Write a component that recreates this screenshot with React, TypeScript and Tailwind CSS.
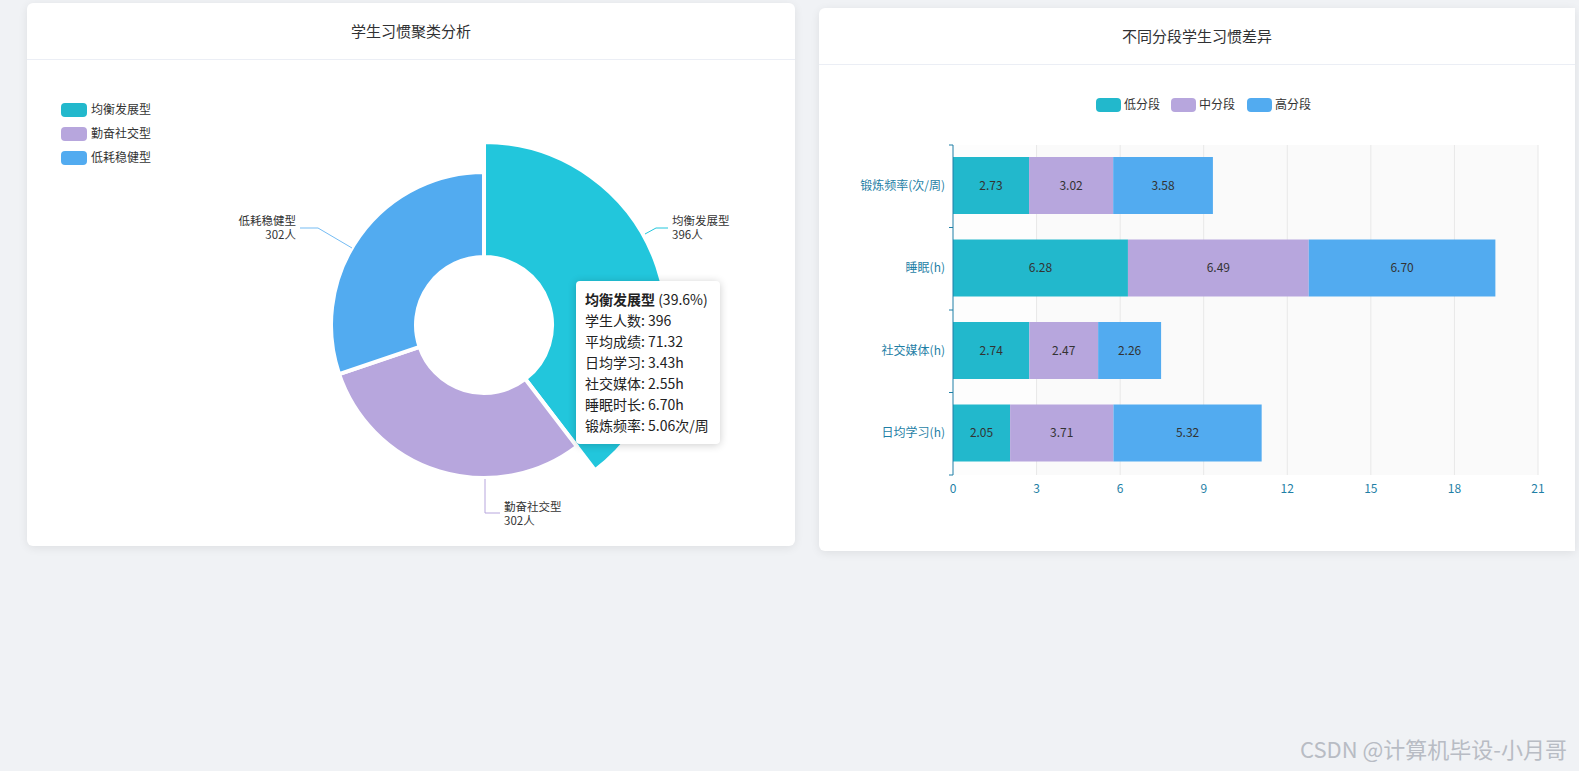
import React from "react";

const F = '"Noto Sans CJK SC", "Noto Sans", sans-serif';

function arc(cx: number, cy: number, r0: number, r1: number, a0: number, a1: number) {
  const p = (r: number, a: number) => {
    const t = ((a - 90) * Math.PI) / 180;
    return `${(cx + r * Math.cos(t)).toFixed(2)},${(cy + r * Math.sin(t)).toFixed(2)}`;
  };
  const large = a1 - a0 > 180 ? 1 : 0;
  return `M${p(r1, a0)} A${r1},${r1} 0 ${large} 1 ${p(r1, a1)} L${p(r0, a1)} A${r0},${r0} 0 ${large} 0 ${p(r0, a0)} Z`;
}

const TEAL = "#22c6dc";
const PURP = "#b7a6dd";
const BLUE = "#52abf0";

function Donut() {
  const cx = 484, cy = 325;
  return (
    <svg width="768" height="486" viewBox="27 60 768 486" style={{ fontFamily: F, display: "block" }}>
      {[
        ["均衡发展型", "#22b8cc", 110],
        ["勤奋社交型", PURP, 134],
        ["低耗稳健型", BLUE, 158],
      ].map(([t, c, y]) => (
        <g key={t as string}>
          <rect x="61" y={(y as number) - 7} width="26" height="14" rx="4" fill={c as string} />
          <text x="91" y={(y as number) + 4} fontSize="12" fill="#333">{t}</text>
        </g>
      ))}
      <path d={arc(cx, cy, 68, 183, 0, 142.6)} fill={TEAL} stroke="#fff" strokeWidth="4" strokeLinejoin="round" />
      <path d={arc(cx, cy, 68, 153, 142.6, 251.3)} fill={PURP} stroke="#fff" strokeWidth="4" strokeLinejoin="round" />
      <path d={arc(cx, cy, 68, 153, 251.3, 360)} fill={BLUE} stroke="#fff" strokeWidth="4" strokeLinejoin="round" />
      <polyline points="645,234 656,228 668,228" fill="none" stroke={TEAL} strokeWidth="1" />
      <text x="672" y="225" fontSize="11.5" fill="#333">均衡发展型</text>
      <text x="672" y="239" fontSize="11.5" fill="#333">396人</text>
      <polyline points="352,248 318,228 300,228" fill="none" stroke={BLUE} strokeWidth="1" opacity="0.8" />
      <text x="296" y="225" fontSize="11.5" fill="#333" textAnchor="end">低耗稳健型</text>
      <text x="296" y="239" fontSize="11.5" fill="#333" textAnchor="end">302人</text>
      <polyline points="485,479 485,513 500,513" fill="none" stroke={PURP} strokeWidth="1" />
      <text x="504" y="511" fontSize="11.5" fill="#333">勤奋社交型</text>
      <text x="504" y="525" fontSize="11.5" fill="#333">302人</text>
    </svg>
  );
}

const rows = [
  ["锻炼频率(次/周)", 2.73, 3.02, 3.58],
  ["睡眠(h)", 6.28, 6.49, 6.7],
  ["社交媒体(h)", 2.74, 2.47, 2.26],
  ["日均学习(h)", 2.05, 3.71, 5.32],
] as const;

function Bars() {
  const x0 = 953, k = 585 / 21, top = 145, bh = 82.5;
  const axis = "#1f7fa6";
  return (
    <svg width="756" height="486" viewBox="819 65 756 486" style={{ fontFamily: F, display: "block" }}>
      {[
        ["低分段", "#22b8cc", 1096],
        ["中分段", PURP, 1171],
        ["高分段", BLUE, 1247],
      ].map(([t, c, x]) => (
        <g key={t as string}>
          <rect x={x as number} y="98" width="25" height="14" rx="4" fill={c as string} />
          <text x={(x as number) + 28} y="109" fontSize="12" fill="#333">{t}</text>
        </g>
      ))}
      <rect x={x0} y={top} width={585} height={330} fill="#fafafa" />
      <rect x={x0} y={top} width={k * 3} height={330} fill="#fdfdfd" />
      {[3, 6, 9, 12, 15, 18, 21].map((v) => (
        <line key={v} x1={x0 + v * k} x2={x0 + v * k} y1={top} y2={475} stroke="#e8e8e8" />
      ))}
      {rows.map((r, i) => {
        const y = top + i * bh + 12;
        const h = 57;
        let x = x0;
        const cols = ["#22b8cc", PURP, BLUE];
        return (
          <g key={r[0]}>
            {[r[1], r[2], r[3]].map((v, j) => {
              const w = v * k;
              const el = (
                <g key={j}>
                  <rect x={x} y={y} width={w} height={h} fill={cols[j]} />
                  <text x={x + w / 2} y={y + h / 2 + 4} fontSize="12" fill="#333" textAnchor="middle">
                    {v.toFixed(2)}
                  </text>
                </g>
              );
              x += w;
              return el;
            })}
            <text x="945" y={y + h / 2 + 4} fontSize="12" fill={axis} textAnchor="end">{r[0]}</text>
          </g>
        );
      })}
      <line x1={x0} x2={x0} y1={top} y2={475} stroke={axis} />
      {[0, 1, 2, 3, 4].map((i) => (
        <line key={i} x1={x0 - 4} x2={x0} y1={top + i * bh} y2={top + i * bh} stroke={axis} />
      ))}
      {[0, 3, 6, 9, 12, 15, 18, 21].map((v) => (
        <text key={v} x={x0 + v * k} y="493" fontSize="12" fill={axis} textAnchor="middle">{v}</text>
      ))}
    </svg>
  );
}

export default function App() {
  return (
    <div className="w-[1579px] h-[771px] bg-[#f0f2f5] overflow-hidden relative" style={{ fontFamily: F }}>
      <div className="flex items-start gap-[24px] pl-[27px] w-[1579px]">
        <div className="mt-[3px] w-[768px] min-w-[768px] h-[543px] bg-white rounded-md shadow-[0_2px_10px_rgba(0,0,0,0.08)] relative shrink-0">
          <div className="h-[57px] border-b border-[#ebeef5] flex items-center justify-center text-[15px] text-[#303133]">
            学生习惯聚类分析
          </div>
          <Donut />
          <div className="absolute left-[549px] top-[278px] w-[144px] bg-white rounded shadow-[0_1px_8px_rgba(0,0,0,0.2)] px-[9px] py-[8px] text-[14px] leading-[21px] text-[#222]">
            <div><b>均衡发展型</b> (39.6%)</div>
            <div>学生人数: 396</div>
            <div>平均成绩: 71.32</div>
            <div>日均学习: 3.43h</div>
            <div>社交媒体: 2.55h</div>
            <div>睡眠时长: 6.70h</div>
            <div>锻炼频率: 5.06次/周</div>
          </div>
        </div>
        <div className="mt-[8px] w-[756px] min-w-[756px] h-[543px] bg-white rounded-l-md shadow-[0_2px_10px_rgba(0,0,0,0.08)] shrink-0">
          <div className="h-[57px] border-b border-[#ebeef5] flex items-center justify-center text-[15px] text-[#303133]">
            不同分段学生习惯差异
          </div>
          <Bars />
        </div>
      </div>
      <div className="absolute right-[12px] bottom-[6px] text-[22px] text-[#b8bcc4]">CSDN @计算机毕设-小月哥</div>
    </div>
  );
}
